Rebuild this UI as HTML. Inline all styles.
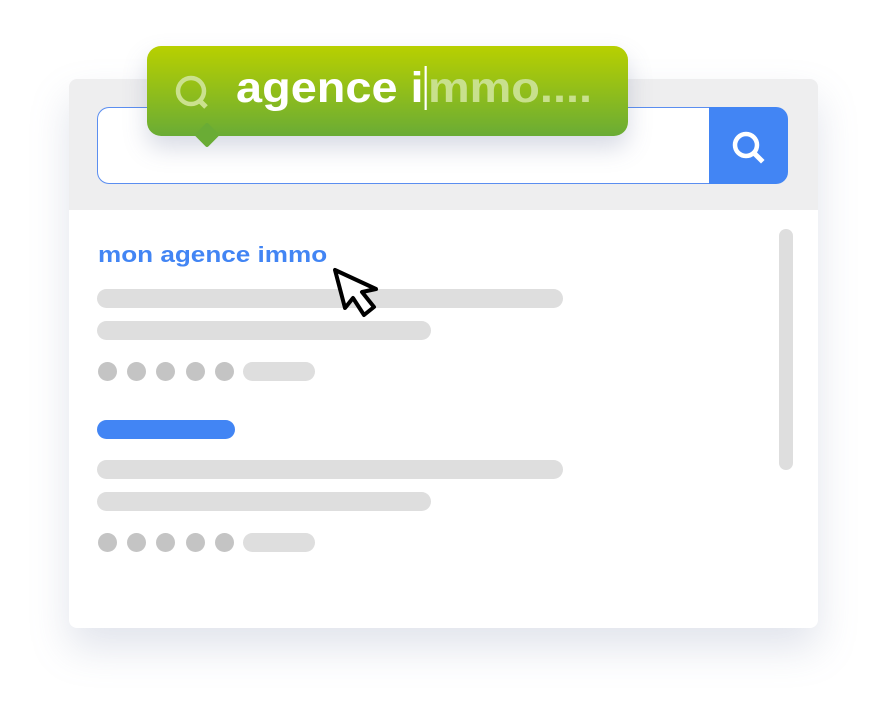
<!DOCTYPE html>
<html><head><style>
body{margin:0;width:888px;height:721px;background:#fff;position:relative;overflow:hidden;font-family:"Liberation Sans",sans-serif}
.a{position:absolute}
.card{left:69px;top:79px;width:749px;height:549px;background:#fff;border-radius:8px;box-shadow:0 20px 40px rgba(120,130,170,.22);overflow:hidden}
.hd{left:0;top:0;width:749px;height:131px;background:#eeeeef}
.bar{background:#dedede;border-radius:10px;height:19px}
.dot{width:19px;height:19px;border-radius:50%;background:#c4c4c4}
</style></head><body>
<div class="a card">
 <div class="a hd"></div>
 <div class="a" style="left:28px;top:28px;width:612px;height:75px;background:#fff;border:1px solid #5b8ef0;border-right:none;border-radius:12px 0 0 12px"></div>
 <div class="a" style="left:640px;top:28px;width:79px;height:77px;background:#4285f4;border-radius:0 12px 12px 0"></div>
 <svg class="a" style="left:659px;top:48px" width="40" height="40" viewBox="0 0 40 40"><circle cx="18" cy="18" r="11" fill="none" stroke="#fff" stroke-width="4.5"/><path d="M26 26l7 7" stroke="#fff" stroke-width="5" stroke-linecap="square"/></svg>
 <div class="a" style="left:710px;top:150px;width:14px;height:241px;background:#dedede;border-radius:7px"></div>
</div>
<div class="a" style="left:98px;top:242px;font-size:22.5px;font-weight:bold;color:#4285f4;white-space:nowrap;transform:scaleX(1.16);transform-origin:0 0">mon agence immo</div>
<div class="a bar" style="left:97px;top:289px;width:466px"></div>
<div class="a bar" style="left:97px;top:321px;width:334px"></div>
<div class="a dot" style="left:98px;top:362px"></div><div class="a dot" style="left:127px;top:362px"></div><div class="a dot" style="left:156px;top:362px"></div><div class="a dot" style="left:186px;top:362px"></div><div class="a dot" style="left:215px;top:362px"></div>
<div class="a bar" style="left:243px;top:362px;width:72px"></div>
<div class="a bar" style="left:97px;top:420px;width:138px;background:#4285f4"></div>
<div class="a bar" style="left:97px;top:460px;width:466px"></div>
<div class="a bar" style="left:97px;top:492px;width:334px"></div>
<div class="a dot" style="left:98px;top:533px"></div><div class="a dot" style="left:127px;top:533px"></div><div class="a dot" style="left:156px;top:533px"></div><div class="a dot" style="left:186px;top:533px"></div><div class="a dot" style="left:215px;top:533px"></div>
<div class="a bar" style="left:243px;top:533px;width:72px"></div>
<svg class="a" style="left:330px;top:266px" width="54" height="56" viewBox="0 0 54 56"><path d="M5 4L15 42L23 32L34 49L44 41L32 26L46 23Z" fill="#fff" stroke="#000" stroke-width="4" stroke-linejoin="round"/></svg>
<div class="a" style="left:147px;top:46px;width:481px;height:90px;border-radius:14px;background:linear-gradient(#b8d000,#6aac35);box-shadow:0 12px 24px rgba(100,110,150,.25)"></div>
<div class="a" style="left:198px;top:126px;width:18px;height:18px;background:#6aac35;transform:rotate(45deg);border-radius:2px"></div>
<svg class="a" style="left:172px;top:72px" width="42" height="42" viewBox="0 0 42 42"><circle cx="19" cy="19" r="13" fill="none" stroke="#cbe18e" stroke-width="4.5"/><path d="M28 29l6 6" stroke="#cbe18e" stroke-width="5"/></svg>
<div class="a" style="left:236px;top:64px;font-size:43px;font-weight:bold;color:#fff;white-space:nowrap;transform:scaleX(1.09);transform-origin:0 0">agence i<span style="display:inline-block;width:2px;height:44px;background:#fff;vertical-align:-8px;margin:0 1px"></span><span style="color:#c8e08d">mmo....</span></div>
</body></html>
